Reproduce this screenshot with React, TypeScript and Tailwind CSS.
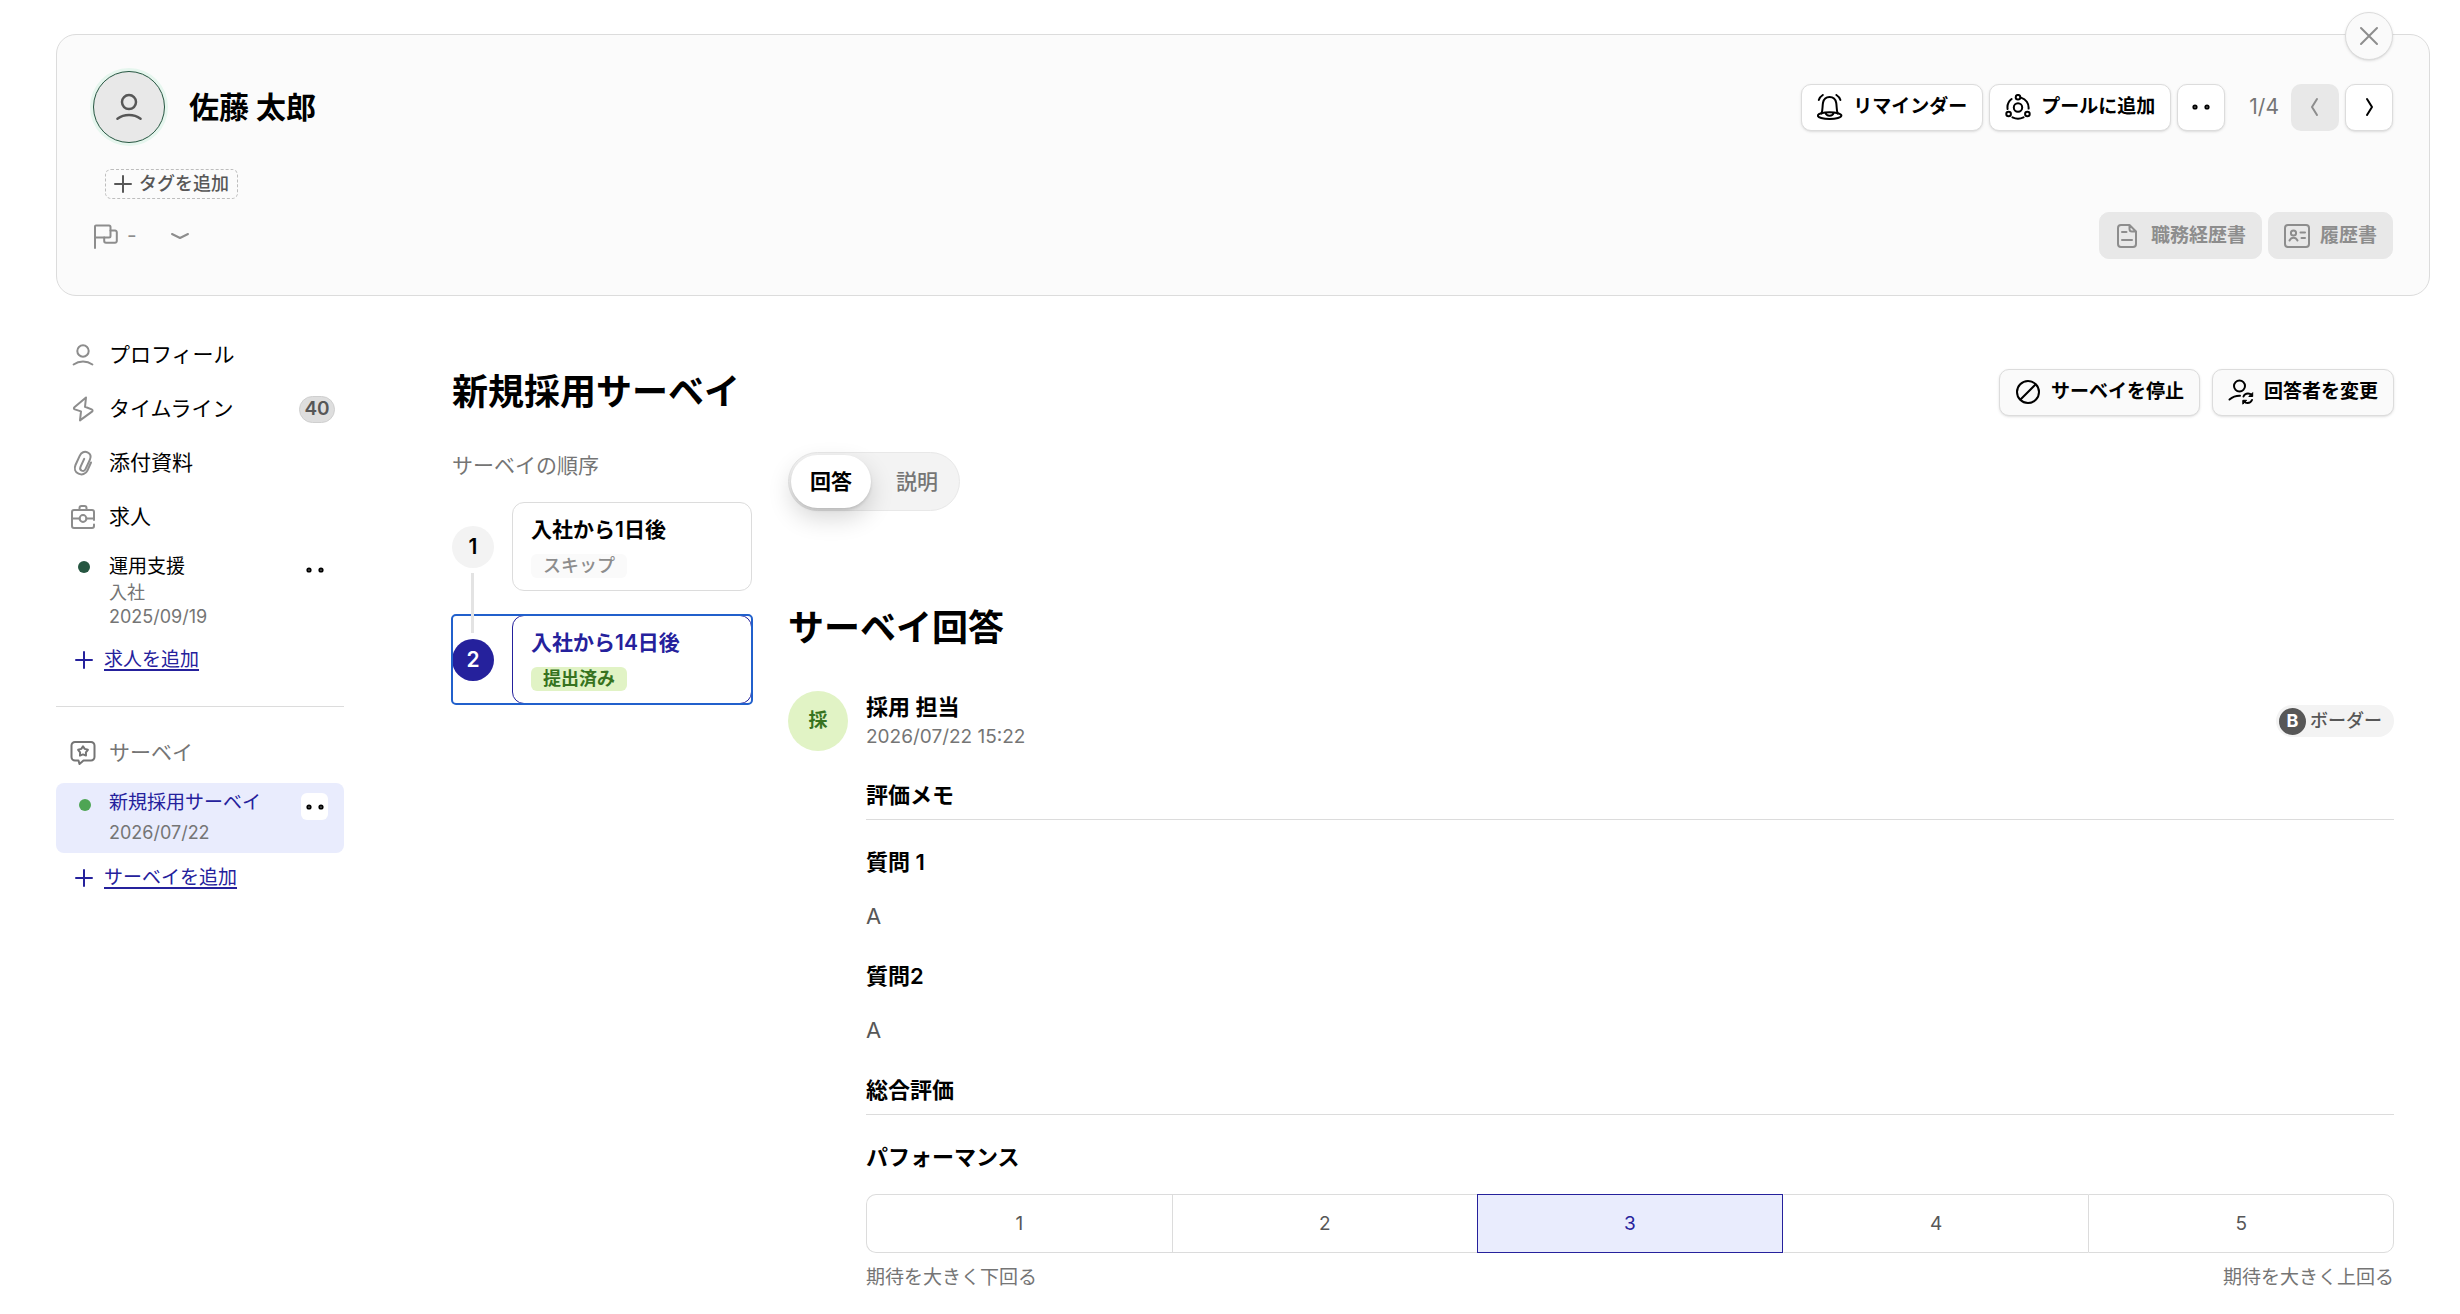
import { useState } from 'react';
import type { ReactNode } from 'react';
import clsx from 'clsx';

interface IconProps {
  size?: string;
  children: ReactNode;
}

function Icon({ size = 'size-[26px]', children }: IconProps) {
  return (
    <svg
      viewBox="0 0 26 26"
      fill="none"
      stroke="currentColor"
      strokeWidth="2"
      strokeLinecap="round"
      strokeLinejoin="round"
      aria-hidden="true"
      className={clsx('shrink-0', size)}
    >
      {children}
    </svg>
  );
}

function BellIcon() {
  return (
    <Icon>
      <path d="M4.500 19.500C5.800 16.500 5.300 12.500 6 8.800 6.700 5 9 3 12.600 3s5.900 2 6.600 5.800c.7 3.700.2 7.700 1.500 10.700" />
      <ellipse cx="12.600" cy="21.600" rx="11.800" ry="3.400" />
      <path d="M8.600 19c.5 1.800 2 2.700 4 2.700s3.500-.9 4-2.700" />
      <path d="M1.800 6C2.400 3.900 3.800 2.200 5.800 1M23.400 6c-.6-2.100-2-3.800-4-5" />
    </Icon>
  );
}

function PoolIcon() {
  return (
    <Icon>
      <circle cx="13" cy="13.500" r="4.200" />
      <circle cx="13" cy="3.200" r="2.300" />
      <circle cx="3.600" cy="20" r="2.300" />
      <circle cx="22.400" cy="20" r="2.300" />
      <path d="M2.600 15C2 11 3.500 7.400 6.600 5M16 3.600c5 1.500 8 6 7.600 11M7.500 23.400c3.500 1.700 7.500 1.700 11 0" />
    </Icon>
  );
}

function DotsIcon() {
  return (
    <Icon>
      <circle cx="7" cy="13" r="1.600" />
      <circle cx="19" cy="13" r="1.600" />
    </Icon>
  );
}

function UserIcon({ size }: { size?: string }) {
  return (
    <Icon size={size}>
      <circle cx="13" cy="9" r="5.700" />
      <path d="M3.600 22.500c5.500-3.900 13.300-3.900 18.800 0" />
    </Icon>
  );
}

function BoltIcon() {
  return (
    <Icon>
      <path d="M16 1.500 4.400 11.300c-.8.700-.6 1.800.4 2.100l6.200 2-1 9L22 15.600c.9-.7.7-1.800-.3-2.200L15 10.800z" />
    </Icon>
  );
}

function ClipIcon() {
  return (
    <Icon>
      <path d="m21 12.500-3.600 8.200c-1.600 3.500-5.600 4.500-8.900 3-3.400-1.600-4.500-5.200-3-8.700l4.300-9.400C11.300 2.300 14.500 1 17.500 2.400c2.900 1.400 3.700 4.300 2.400 7.200l-4.400 9.600c-.8 1.700-2.400 2.100-3.800 1.500-1.500-.7-1.900-2.200-1.200-3.800l3.700-8.100" />
    </Icon>
  );
}

function BriefcaseIcon() {
  return (
    <Icon>
      <path d="M24 20.500v1.500a2 2 0 0 1-2 2H4a2 2 0 0 1-2-2V8a2 2 0 0 1 2-2h18a2 2 0 0 1 2 2v8M9.500 5.500V4a2 2 0 0 1 2-2h3a2 2 0 0 1 2 2v1.500M2 14.500h7.500M16.500 14.500H24" />
      <circle cx="13" cy="14.500" r="3.400" />
    </Icon>
  );
}

function SurveyIcon() {
  return (
    <Icon>
      <path d="M5 2h16a3.500 3.500 0 0 1 3.500 3.500V17a3.500 3.500 0 0 1-3.500 3.500h-7.500L9.500 24l-1-3.500H5A3.500 3.500 0 0 1 1.500 17V5.500A3.500 3.500 0 0 1 5 2z" />
      <path d="m13 6.300 1.700 2.600 3.200.9-2 2.500.1 3.300-3-1.200-3 1.200.1-3.300-2-2.500 3.200-.9z" />
    </Icon>
  );
}

function PlusIcon() {
  return (
    <Icon>
      <path d="M13 5v16M5 13h16" />
    </Icon>
  );
}

function FlagIcon() {
  return (
    <Icon>
      <path d="M2 25V3.500a1 1 0 0 1 1-1h13a1.500 1.500 0 0 1 1.500 1.500v9a1.500 1.500 0 0 1-1.500 1.500H2" />
      <path d="M17.500 7.500H22a1.800 1.800 0 0 1 1.800 1.800V18a1.800 1.800 0 0 1-1.800 1.800H13a1.800 1.800 0 0 1-1.800-1.800v-3.500" />
    </Icon>
  );
}

function DocIcon() {
  return (
    <Icon>
      <path d="M6 2h8.500L21 8.500V21a3 3 0 0 1-3 3H6a3 3 0 0 1-3-3V5a3 3 0 0 1 3-3zM14.500 2.500V6A2.500 2.500 0 0 0 17 8.500h3.500M7 9h4.500M7 17h10" />
    </Icon>
  );
}

function IdCardIcon() {
  return (
    <Icon>
      <rect x="1" y="2" width="24" height="22" rx="3" />
      <circle cx="9.500" cy="10" r="2.600" />
      <path d="M5.500 17.500c1-2 2.300-2.800 4-2.800s3 .8 4 2.800M16.500 9.500H21M17.500 15H21" />
    </Icon>
  );
}

function StopIcon() {
  return (
    <Icon>
      <circle cx="13" cy="13" r="11" />
      <path d="M20.500 5.500 5.500 20.500" />
    </Icon>
  );
}

function UserSwapIcon() {
  return (
    <Icon>
      <circle cx="11.500" cy="7" r="5.500" />
      <path d="M1.500 20.500c3-2.500 6.500-3.800 10.500-3.700" />
      <path d="M15.500 17.500c.8-2 2.500-3 4.500-3 1.500 0 2.700.6 3.700 1.700M24 21c-.8 2-2.500 3-4.500 3-1.500 0-2.700-.6-3.700-1.700" />
      <path d="M24.700 14v3.500h-3.500zM14.800 24.800v-3.500h3.500z" fill="currentColor" strokeWidth="1" />
    </Icon>
  );
}

interface ActionButtonProps {
  icon: ReactNode;
  label: string;
  variant?: 'white' | 'gray' | 'disabled';
}

function ActionButton({ icon, label, variant = 'white' }: ActionButtonProps) {
  return (
    <button
      type="button"
      disabled={variant === 'disabled'}
      className={clsx(
        'flex h-[47px] items-center gap-2.5 rounded-[10px] border px-[15px] text-[19px] leading-7 font-semibold whitespace-nowrap',
        variant === 'white' && 'border-[#dcdcdc] bg-white text-black shadow-sm',
        variant === 'gray' && 'border-[#dcdcdc] bg-[#fafafa] text-black shadow-sm',
        variant === 'disabled' && 'border-[#e8e8e8] bg-[#e8e8e8] text-[#8d8d8d]'
      )}
    >
      {icon}
      {label}
    </button>
  );
}

function ProfileHeader() {
  return (
    <header className="relative rounded-[20px] border border-[#dcdcdc] bg-[#fbfbfb] p-9">
      <button
        type="button"
        aria-label="閉じる"
        className="absolute -top-[23px] right-9 flex size-12 items-center justify-center rounded-full border border-[#dcdcdc] bg-[#fafafa] text-[#8d8d8d] shadow-sm"
      >
        <Icon>
          <path d="M5 5l16 16M21 5 5 21" />
        </Icon>
      </button>

      <div className="flex items-center justify-between">
        <div className="flex items-center gap-6">
          <div className="flex size-[72px] items-center justify-center rounded-full border border-[#265641] bg-[#e8e8e8] text-[#575757] ring-3 ring-[#e6f6ee]">
            <UserIcon size="size-8" />
          </div>
          <h1 className="text-[30px] leading-10 font-bold">佐藤 太郎</h1>
        </div>
        <div className="flex items-center gap-1.5">
          <ActionButton icon={<BellIcon />} label="リマインダー" />
          <ActionButton icon={<PoolIcon />} label="プールに追加" />
          <button
            type="button"
            aria-label="その他"
            className="flex h-[47px] w-12 items-center justify-center rounded-[10px] border border-[#dcdcdc] bg-white shadow-sm"
          >
            <DotsIcon />
          </button>
          <span className="pr-1.5 pl-[18px] text-[21px] leading-7 text-[#757575]">1/4</span>
          <button
            type="button"
            aria-label="前へ"
            disabled
            className="flex h-[47px] w-12 items-center justify-center rounded-[10px] bg-[#e8e8e8] text-[#8d8d8d]"
          >
            <Icon>
              <path d="m15 5-5 8 5 8" />
            </Icon>
          </button>
          <button
            type="button"
            aria-label="次へ"
            className="flex h-[47px] w-12 items-center justify-center rounded-[10px] border border-[#dcdcdc] bg-white shadow-sm"
          >
            <Icon>
              <path d="m11 5 5 8-5 8" />
            </Icon>
          </button>
        </div>
      </div>

      <button
        type="button"
        className="mt-[26px] ml-3 flex h-[30px] items-center gap-[3px] rounded-md border border-dashed border-[#bdbdbd] pr-2 pl-1 text-[18px] leading-6 font-medium text-[#575757]"
      >
        <PlusIcon />
        タグを追加
      </button>

      <div className="mt-[13px] flex items-center justify-between">
        <button type="button" className="flex items-center text-[21px] leading-7 text-[#8d8d8d]">
          <FlagIcon />
          <span className="ml-2 w-9 text-left">-</span>
          <span className="ml-1 flex">
            <Icon>
              <path d="m5 11 8 4 8-4" />
            </Icon>
          </span>
        </button>
        <div className="flex gap-1.5">
          <ActionButton icon={<DocIcon />} label="職務経歴書" variant="disabled" />
          <ActionButton icon={<IdCardIcon />} label="履歴書" variant="disabled" />
        </div>
      </div>
    </header>
  );
}

const navItems = [
  { label: 'プロフィール', icon: <UserIcon /> },
  { label: 'タイムライン', icon: <BoltIcon />, count: 40 },
  { label: '添付資料', icon: <ClipIcon /> },
  { label: '求人', icon: <BriefcaseIcon /> },
];

function AddLink({ label }: { label: string }) {
  return (
    <a href="#" className="flex items-center gap-[7px] pl-[15px] text-[19px] leading-7 text-[#25219c]">
      <PlusIcon />
      <span className="underline decoration-2 underline-offset-3">{label}</span>
    </a>
  );
}

function Sidebar() {
  return (
    <nav className="w-72 shrink-0 pt-8">
      <ul>
        {navItems.map((item) => (
          <li key={item.label}>
            <a href="#" className="flex h-[54px] items-center gap-[13px] pr-[9px] pl-3.5 text-[21px] leading-7">
              <span className="flex text-[#8d8d8d]">{item.icon}</span>
              {item.label}
              {item.count && (
                <span className="ml-auto flex h-[27px] w-9 items-center justify-center rounded-full border border-[#cfcfcf] bg-[#dedede] text-[19px] leading-6 font-semibold text-[#575757]">
                  {item.count}
                </span>
              )}
            </a>
          </li>
        ))}
      </ul>

      <div className="mt-[9px] flex items-start pr-4 pl-[22px]">
        <span className="mt-2 mr-[19px] size-3 rounded-full bg-[#265641]" />
        <div className="grow">
          <p className="text-[19px] leading-7">運用支援</p>
          <p className="text-[18px] leading-6 text-[#757575]">入社</p>
          <p className="text-[18px] leading-6 text-[#757575]">2025/09/19</p>
        </div>
        <button type="button" aria-label="求人のメニュー" className="mt-[3px] flex size-[27px] items-center justify-center">
          <DotsIcon />
        </button>
      </div>
      <div className="mt-[17px]">
        <AddLink label="求人を追加" />
      </div>

      <hr className="mt-8 border-[#dcdcdc]" />

      <div className="mt-[19px] flex h-[54px] items-center gap-[13px] pl-3.5 text-[21px] leading-7 text-[#757575]">
        <SurveyIcon />
        サーベイ
      </div>
      <div className="mt-[3px] flex items-start rounded-lg bg-[#e9ecfd] pt-1.5 pr-4 pb-2 pl-[23px]">
        <span className="mt-2.5 mr-[18px] size-3 rounded-full bg-[#4ea554]" />
        <div className="grow">
          <p className="text-[19px] leading-7 text-[#25219c]">新規採用サーベイ</p>
          <p className="mt-1 text-[18px] leading-6 text-[#757575]">2026/07/22</p>
        </div>
        <button
          type="button"
          aria-label="サーベイのメニュー"
          className="mt-1 flex size-[27px] items-center justify-center rounded-md bg-white"
        >
          <DotsIcon />
        </button>
      </div>
      <div className="mt-[11px]">
        <AddLink label="サーベイを追加" />
      </div>
    </nav>
  );
}

const steps = [
  { id: 1, title: '入社から1日後', status: 'スキップ' },
  { id: 2, title: '入社から14日後', status: '提出済み' },
];

function SurveySteps() {
  const [current, setCurrent] = useState(2);

  return (
    <section className="w-[300px] shrink-0">
      <h3 className="text-[21px] leading-7 text-[#757575]">サーベイの順序</h3>
      <ol className="mt-[22px] flex flex-col gap-6">
        {steps.map((step, i) => {
          const active = step.id === current;
          return (
            <li key={step.id} className="relative">
              <button
                type="button"
                onClick={() => setCurrent(step.id)}
                className={clsx(
                  'flex w-full items-center gap-[18px] rounded-sm text-left',
                  active && 'outline-2 -outline-offset-1 outline-[#2160cc]'
                )}
              >
                <span
                  className={clsx(
                    'flex size-[42px] items-center justify-center rounded-full text-[21px] leading-7 font-semibold',
                    active ? 'bg-[#25219c] text-white' : 'bg-[#f3f3f3]'
                  )}
                >
                  {step.id}
                </span>
                <span
                  className={clsx(
                    'flex grow flex-col items-start rounded-xl border px-[18px] pt-[13px] pb-3',
                    active ? 'border-[#25219c]' : 'border-[#dcdcdc]'
                  )}
                >
                  <span className={clsx('text-[21px] leading-7 font-semibold', active && 'text-[#25219c]')}>
                    {step.title}
                  </span>
                  <span
                    className={clsx(
                      'mt-2.5 rounded-md px-3 text-[18px] leading-6',
                      step.status === '提出済み'
                        ? 'bg-[#e1f3c5] font-semibold text-[#37731f]'
                        : 'bg-[#fafafa] font-medium text-[#8d8d8d]'
                    )}
                  >
                    {step.status}
                  </span>
                </span>
              </button>
              {i < steps.length - 1 && (
                <span className="absolute top-[71px] left-[19px] z-10 h-[60px] w-[3px] bg-[#e3e3e3]" />
              )}
            </li>
          );
        })}
      </ol>
    </section>
  );
}

const tabs = ['回答', '説明'];

function Tabs() {
  const [tab, setTab] = useState('回答');

  return (
    <div role="tablist" className="flex w-fit gap-1.5 rounded-full border border-[#e8e8e8] bg-[#f3f3f3] p-0.5">
      {tabs.map((name) => (
        <button
          key={name}
          type="button"
          role="tab"
          aria-selected={tab === name}
          onClick={() => setTab(name)}
          className={clsx(
            'h-[53px] rounded-full px-[19px] text-[21px] leading-7',
            tab === name
              ? 'bg-white font-semibold text-black shadow-[0_2px_3px_rgba(0,0,0,0.12),0_10px_24px_rgba(0,0,0,0.16)]'
              : 'font-medium text-[#757575]'
          )}
        >
          {name}
        </button>
      ))}
    </div>
  );
}

function SectionTitle({ children }: { children: ReactNode }) {
  return (
    <h3 className="mt-7 border-b border-[#dcdcdc] pb-2 text-[22px] leading-8 font-semibold">{children}</h3>
  );
}

const scores = [1, 2, 3, 4, 5];

function ScoreScale() {
  const [score, setScore] = useState(3);

  return (
    <div className="mt-[21px]">
      <div className="grid grid-cols-5">
        {scores.map((value) => (
          <label
            key={value}
            className={clsx(
              'flex h-[59px] items-center justify-center border-y border-l text-[19px] leading-7 first:rounded-l-[10px] last:rounded-r-[10px] last:border-r',
              value === score && 'border-r border-[#25219c] bg-[#e9ecfd] text-[#25219c]',
              value === score + 1 && 'border-l-transparent',
              value !== score && 'border-y-[#dcdcdc] border-r-[#dcdcdc] text-[#575757]',
              value !== score && value !== score + 1 && 'border-l-[#dcdcdc]'
            )}
          >
            <input
              type="radio"
              name="performance"
              value={value}
              checked={value === score}
              onChange={() => setScore(value)}
              className="sr-only"
            />
            {value}
          </label>
        ))}
      </div>
      <div className="mt-[11px] flex justify-between text-[19px] leading-7 text-[#757575]">
        <span>期待を大きく下回る</span>
        <span>期待を大きく上回る</span>
      </div>
    </div>
  );
}

function SurveyAnswer() {
  return (
    <section className="min-w-0 grow">
      <Tabs />
      <h2 className="mt-[93px] text-[36px] leading-[48px] font-bold">サーベイ回答</h2>

      <div className="mt-[39px] flex items-center gap-[18px]">
        <div className="flex size-[60px] items-center justify-center rounded-full bg-[#e1f3c5] text-[19px] leading-7 font-semibold text-[#37731f]">
          採
        </div>
        <div>
          <p className="text-[22px] leading-8 font-semibold">採用 担当</p>
          <p className="text-[19px] leading-7 text-[#757575]">2026/07/22 15:22</p>
        </div>
        <div className="ml-auto flex h-8 items-center gap-1 rounded-full bg-[#f3f3f3] pr-3 pl-[3px] text-[18px] leading-6 font-medium text-[#575757]">
          <span className="flex size-[27px] items-center justify-center rounded-full bg-[#575757] font-bold text-white">
            B
          </span>
          ボーダー
        </div>
      </div>

      <div className="pl-[78px]">
        <SectionTitle>評価メモ</SectionTitle>
        <h4 className="mt-[26px] text-[22px] leading-8 font-semibold">質問 1</h4>
        <p className="mt-[22px] text-[22px] leading-8 text-[#575757]">A</p>
        <h4 className="mt-7 text-[22px] leading-8 font-semibold">質問2</h4>
        <p className="mt-[22px] text-[22px] leading-8 text-[#575757]">A</p>

        <SectionTitle>総合評価</SectionTitle>
        <h4 className="mt-[26px] text-[22px] leading-8 font-semibold">パフォーマンス</h4>
        <ScoreScale />
      </div>
    </section>
  );
}

export default function App() {
  return (
    <div className="min-h-screen bg-white pt-[34px] pr-[30px] pl-14 font-['Inter','Noto_Sans_CJK_JP',sans-serif] text-black">
      <ProfileHeader />
      <div className="flex gap-[108px] pr-9">
        <Sidebar />
        <main className="min-w-0 grow pt-[72px]">
          <div className="flex items-center justify-between">
            <h2 className="text-[36px] leading-[48px] font-bold">新規採用サーベイ</h2>
            <div className="flex gap-3">
              <ActionButton icon={<StopIcon />} label="サーベイを停止" variant="gray" />
              <ActionButton icon={<UserSwapIcon />} label="回答者を変更" variant="gray" />
            </div>
          </div>
          <div className="mt-9 flex gap-9">
            <SurveySteps />
            <SurveyAnswer />
          </div>
        </main>
      </div>
    </div>
  );
}
